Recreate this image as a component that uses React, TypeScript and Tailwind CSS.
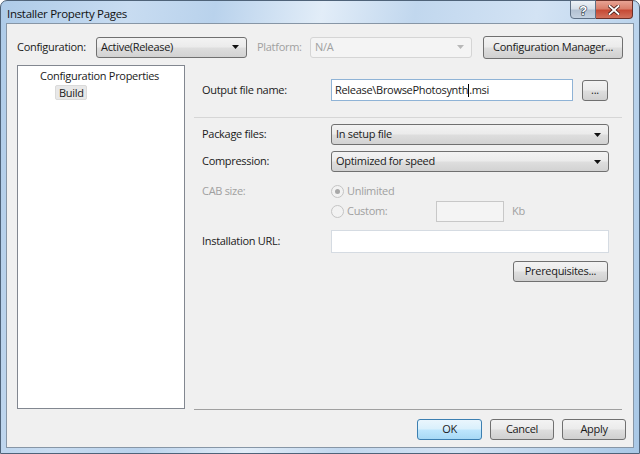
import React from 'react';

const font = { fontFamily: '"Open Sans", "Noto Sans", sans-serif' };

const Arrow = ({ disabled }: { disabled?: boolean }) => (
  <svg width="7" height="4" viewBox="0 0 7 4" className="shrink-0">
    <path d="M0 0h7L3.5 4z" fill={disabled ? '#b8b8b8' : '#111'} />
  </svg>
);

const Combo = ({ value, width, disabled }: { value: string; width: string; disabled?: boolean }) => (
  <div
    className={`${width} h-[21px] flex items-center justify-between pl-[4px] pr-[7px] rounded-[3px] border ${
      disabled
        ? 'border-[#d5d5d5] bg-[#f4f4f4] text-[#a0a0a0]'
        : 'border-[#707070] bg-[linear-gradient(#f3f3f3_0%,#ebebeb_48%,#dedede_52%,#d2d2d2_100%)] text-[#1a1a1a]'
    }`}
  >
    <span>{value}</span>
    <Arrow disabled={disabled} />
  </div>
);

const Button = ({ label, width, primary }: { label: string; width: string; primary?: boolean }) => (
  <div
    className={`${width} h-[21px] flex items-center justify-center rounded-[3px] border ${
      primary
        ? 'border-[#3c7fb1] bg-[linear-gradient(#eaf6fd_0%,#d9f0fc_48%,#bee6fd_52%,#a7d9f5_100%)]'
        : 'border-[#707070] bg-[linear-gradient(#f3f3f3_0%,#ebebeb_48%,#dedede_52%,#d0d0d0_100%)]'
    } text-[#1a1a1a]`}
  >
    {label}
  </div>
);

const Radio = ({ checked }: { checked?: boolean }) => (
  <div className="w-[13px] h-[13px] rounded-full border border-[#c4c4c4] bg-[#f2f2f2] flex items-center justify-center shrink-0">
    {checked && <div className="w-[5px] h-[5px] rounded-full bg-[#a8a8a8]" />}
  </div>
);

export default function App() {
  return (
    <div className="w-[640px] h-[454px] bg-white">
      <div
        style={font}
        className="w-[640px] h-[454px] flex flex-col rounded-t-[7px] border border-[#4f6379] bg-[linear-gradient(100deg,#aecbe8_0%,#c8dcf1_18%,#b9d2ec_30%,#e2edf8_45%,#c1d7ee_58%,#d3e3f4_75%,#a9c8e6_100%)] text-[11px] tracking-[-0.3px] text-[#1a1a1a]"
      >
        <div className="h-[22px] flex items-start pl-[6px] relative">
          <span className="mt-[4px] text-[11.5px] text-[#111]">Installer Property Pages</span>
          <div className="absolute right-[6px] top-[-1px] flex">
            <div className="w-[26px] h-[19px] rounded-bl-[4px] border border-[#5f7085] bg-[linear-gradient(#eef2f7_0%,#d6dfe9_45%,#b3c1d2_55%,#c4d1e0_100%)] flex items-center justify-center">
              <svg width="12" height="14" viewBox="0 0 12 14">
                <text
                  x="6"
                  y="12"
                  textAnchor="middle"
                  fontSize="13"
                  fontWeight="700"
                  fontFamily="Liberation Sans, sans-serif"
                  fill="#fff"
                  stroke="#2a3444"
                  strokeWidth="1.2"
                  paintOrder="stroke"
                >
                  ?
                </text>
              </svg>
            </div>
            <div className="w-[37px] h-[19px] rounded-br-[4px] border border-l-0 border-[#6b2f28] bg-[linear-gradient(#e8a394_0%,#d97f6c_45%,#c64a35_55%,#d2715c_100%)] flex items-center justify-center">
              <svg width="12" height="10" viewBox="0 0 12 10">
                <path d="M1.5 1l9 8M10.5 1l-9 8" stroke="#3b1410" strokeWidth="3.4" strokeLinecap="square" />
                <path d="M1.5 1l9 8M10.5 1l-9 8" stroke="#fff" strokeWidth="1.9" strokeLinecap="square" />
              </svg>
            </div>
          </div>
        </div>

        <div className="flex-1 mx-[5px] mb-[5px] border border-[#8796a6] bg-[#f0f0f0] flex flex-col">
          <div className="mt-[12px] h-[22px] flex items-center pl-[10px]">
            <span className="w-[79px]">Configuration:</span>
            <Combo value="Active(Release)" width="w-[151px]" />
            <span className="ml-[10px] w-[53px] text-[#a0a0a0]">Platform:</span>
            <Combo value="N/A" width="w-[162px]" disabled />
            <div className="ml-[11px]">
              <Button label="Configuration Manager..." width="w-[140px] h-[23px]" />
            </div>
          </div>

          <div className="mt-[7px] flex pl-[10px]">
            <div className="w-[168px] h-[344px] border border-[#828790] bg-white pt-[2px]">
              <div className="pl-[22px] leading-[15px]">Configuration Properties</div>
              <div className="ml-[37px] mt-[2px] w-[32px] h-[15px] bg-[#e8e8e8] border border-[#dadada] rounded-[2px] flex items-center pl-[3px] leading-none">
                Build
              </div>
            </div>

            <div className="ml-[9px] w-[428px] h-[345px] border-b border-[#a0a0a0] flex flex-col">
              <div className="mt-[14px] flex items-center pl-[8px] h-[22px]">
                <span className="w-[129px]">Output file name:</span>
                <div className="w-[242px] h-[22px] border border-[#8fb3d6] bg-white flex items-center pl-[3px]">
                  Release\BrowsePhotosynth<span className="inline-block w-px h-[13px] bg-black" />.msi
                </div>
                <div className="ml-[9px]">
                  <Button label="..." width="w-[26px] h-[20px]" />
                </div>
              </div>

              <div className="mt-[16px] border-t border-[#d6d6d6]" />

              <div className="mt-[6px] flex items-center pl-[8px] h-[21px]">
                <span className="w-[129px]">Package files:</span>
                <Combo value="In setup file" width="w-[278px]" />
              </div>
              <div className="mt-[6px] flex items-center pl-[8px] h-[21px]">
                <span className="w-[129px]">Compression:</span>
                <Combo value="Optimized for speed" width="w-[278px]" />
              </div>

              <div className="mt-[9px] flex items-center pl-[8px] h-[20px] text-[#a0a0a0]">
                <span className="w-[129px]">CAB size:</span>
                <Radio checked />
                <span className="ml-[3px]">Unlimited</span>
              </div>
              <div className="flex items-center pl-[8px] h-[21px] text-[#a0a0a0]">
                <span className="w-[129px]" />
                <Radio />
                <span className="ml-[3px] w-[89px]">Custom:</span>
                <div className="w-[68px] h-[21px] border border-[#c8c8c8] bg-[#f4f4f4]" />
                <span className="ml-[8px]">Kb</span>
              </div>

              <div className="mt-[8px] flex items-center pl-[8px] h-[23px]">
                <span className="w-[129px]">Installation URL:</span>
                <div className="w-[278px] h-[23px] border border-[#d5dbe2] bg-white" />
              </div>

              <div className="mt-[8px] flex justify-end pr-[14px]">
                <Button label="Prerequisites..." width="w-[95px]" />
              </div>
            </div>
          </div>

          <div className="mt-[9px] flex justify-end gap-[8px] pr-[7px]">
            <Button label="OK" width="w-[65px]" primary />
            <Button label="Cancel" width="w-[64px]" />
            <Button label="Apply" width="w-[64px]" />
          </div>
        </div>
      </div>
    </div>
  );
}
